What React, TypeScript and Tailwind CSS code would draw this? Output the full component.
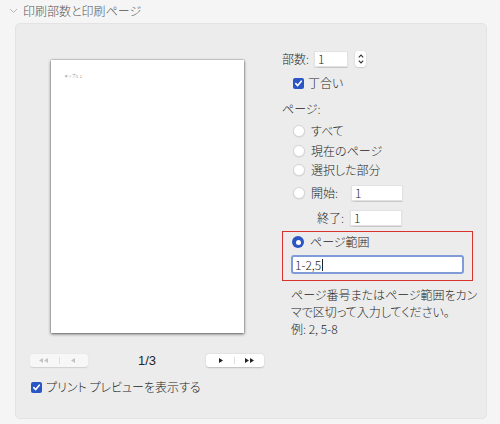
import React from 'react';

// 文字は Noto Sans CJK JP + palt でプロポーショナル仮名
const font = "[font-family:'Noto_Sans_CJK_JP','Liberation_Sans',sans-serif] [font-feature-settings:'palt'] font-light";

function Radio({ checked }: { checked?: boolean }) {
  if (checked) {
    return (
      <span className="w-[12px] h-[12px] rounded-full bg-[#2a55c4] flex items-center justify-center shrink-0">
        <span className="w-[5px] h-[5px] rounded-full bg-white"></span>
      </span>
    );
  }
  return (
    <span className="w-[12px] h-[12px] rounded-full bg-white border border-[#d6d6d6] shadow-[0_0.5px_1px_rgba(0,0,0,0.12)] shrink-0"></span>
  );
}

function Checkbox() {
  return (
    <span className="w-[11px] h-[11px] rounded-[2px] bg-[#2a55c4] flex items-center justify-center shrink-0">
      <svg width="9" height="9" viewBox="0 0 9 9">
        <path d="M1.8 4.6 L3.7 6.6 L7.3 2.2" fill="none" stroke="white" strokeWidth="1.6" strokeLinecap="round" strokeLinejoin="round" />
      </svg>
    </span>
  );
}

function Field({ value, w }: { value: string; w: string }) {
  return (
    <div className={`${w} h-[16px] bg-white border border-[#e2e2e2] shadow-[0_0.5px_1px_rgba(0,0,0,0.15)] flex items-center px-[3px] text-[12px] text-[#262626] leading-none`}>
      {value}
    </div>
  );
}

export default function App() {
  return (
    <div className={`w-[500px] h-[424px] bg-[#f5f5f5] relative overflow-hidden ${font}`}>
      {/* ヘッダー */}
      <div className="h-[23px] flex items-center pl-[9px] pb-[1px]">
        <svg width="9" height="6" viewBox="0 0 9 6" className="mr-[5px]">
          <path d="M1 1 L4.5 4.5 L8 1" fill="none" stroke="#b5b5b5" strokeWidth="1" />
        </svg>
        <span className="text-[12px] text-[#555555] leading-none">印刷部数と印刷ページ</span>
      </div>

      {/* パネル */}
      <div className="ml-[15px] w-[472px] h-[396px] bg-[#ececec] border border-[#e3e3e3] rounded-[5px] flex">
        {/* 左カラム: プレビュー */}
        <div className="w-[266px] pl-[14px] pr-[18px] pt-[36px] flex flex-col">
          <div className="self-center w-[193px] h-[273px] bg-white shadow-[0_1px_3px_rgba(0,0,0,0.6),0_0_1px_rgba(0,0,0,0.5)] relative">
            <span className="absolute left-[14px] top-[14px] text-[4px] text-[#555] leading-none">キップル 1</span>
          </div>

          <div className="mt-[21px] flex items-center justify-between">
            <div className="w-[58px] h-[13px] bg-[#f7f7f7] rounded-[3px] shadow-[0_0.5px_1px_rgba(0,0,0,0.12)] flex items-center">
              <span className="flex-1 flex justify-center">
                <svg width="10" height="5" viewBox="0 0 10 5"><path d="M0 2.5 L4 0 L4 5 Z M5 2.5 L9 0 L9 5 Z" fill="#c4c4c4" /></svg>
              </span>
              <span className="w-px h-[7px] bg-[#dedede]"></span>
              <span className="flex-1 flex justify-center">
                <svg width="5" height="5" viewBox="0 0 5 5"><path d="M0 2.5 L4 0 L4 5 Z" fill="#c4c4c4" /></svg>
              </span>
            </div>
            <span className="text-[13px] text-[#262626] leading-none [font-family:'Liberation_Sans',sans-serif] font-normal">1/3</span>
            <div className="w-[58px] h-[13px] bg-white rounded-[3px] shadow-[0_0.5px_1.5px_rgba(0,0,0,0.2)] flex items-center">
              <span className="flex-1 flex justify-center">
                <svg width="5" height="5" viewBox="0 0 5 5"><path d="M1 0 L5 2.5 L1 5 Z" fill="#222" /></svg>
              </span>
              <span className="w-px h-[7px] bg-[#dedede]"></span>
              <span className="flex-1 flex justify-center">
                <svg width="10" height="5" viewBox="0 0 10 5"><path d="M0 0 L4 2.5 L0 5 Z M5 0 L9 2.5 L5 5 Z" fill="#222" /></svg>
              </span>
            </div>
          </div>

          <div className="mt-[13px] flex items-center h-[14px] pl-[1px]">
            <Checkbox />
            <span className="ml-[4px] text-[12px] text-[#262626] leading-none">プリント プレビューを表示する</span>
          </div>
        </div>

        {/* 右カラム: 設定 */}
        <div className="flex-1 pt-[27px] flex flex-col text-[12px] text-[#262626] leading-none">
          <div className="flex items-center h-[16px]">
            <span className="w-[32px]">部数:</span>
            <Field value="1" w="w-[34px]" />
            <span className="ml-[7px] w-[11px] h-[16px] bg-white rounded-[3px] shadow-[0_0.5px_1.5px_rgba(0,0,0,0.22)] flex flex-col items-center justify-center gap-[2px]">
              <svg width="6" height="4" viewBox="0 0 6 4"><path d="M0.8 3.3 L3 1 L5.2 3.3" fill="none" stroke="#333" strokeWidth="1.1" /></svg>
              <svg width="6" height="4" viewBox="0 0 6 4"><path d="M0.8 0.7 L3 3 L5.2 0.7" fill="none" stroke="#333" strokeWidth="1.1" /></svg>
            </span>
          </div>

          <div className="mt-[8px] flex items-center h-[16px] pl-[11px]">
            <Checkbox />
            <span className="ml-[4px]">丁合い</span>
          </div>

          <div className="mt-[10px] h-[16px] flex items-center">ページ:</div>

          <div className="mt-[6px] flex items-center h-[16px] pl-[11px]">
            <Radio />
            <span className="ml-[6px]">すべて</span>
          </div>
          <div className="mt-[4px] flex items-center h-[16px] pl-[11px]">
            <Radio />
            <span className="ml-[6px]">現在のページ</span>
          </div>
          <div className="mt-[3px] flex items-center h-[16px] pl-[11px]">
            <Radio />
            <span className="ml-[6px]">選択した部分</span>
          </div>
          <div className="mt-[7px] flex items-center h-[16px] pl-[11px]">
            <Radio />
            <span className="ml-[6px] w-[40px]">開始:</span>
            <Field value="1" w="w-[52px]" />
          </div>
          <div className="mt-[9px] flex items-center h-[16px] pl-[35px]">
            <span className="w-[33px]">終了:</span>
            <Field value="1" w="w-[52px]" />
          </div>

          <div className="mt-[5px] w-[191px] h-[50px] border border-[#d8342c] pl-[9px] pr-[8px] pt-[2px]">
            <div className="flex items-center h-[16px]">
              <Radio checked />
              <span className="ml-[6px]">ページ範囲</span>
            </div>
            <div className="mt-[5px] ml-[-1px] h-[19px] bg-white border-[2px] border-[#7f9bd8] rounded-[3px] flex items-center px-[2px] text-[12px]">
              1-2,5<span className="w-px h-[12px] bg-[#222] ml-[1px]"></span>
            </div>
          </div>

          <div className="mt-[5px] pl-[9px] leading-[17px] text-[12px]">
            ページ番号またはページ範囲をカン<br />
            マで区切って入力してください。<br />
            例: 2, 5-8
          </div>
        </div>
      </div>
    </div>
  );
}
